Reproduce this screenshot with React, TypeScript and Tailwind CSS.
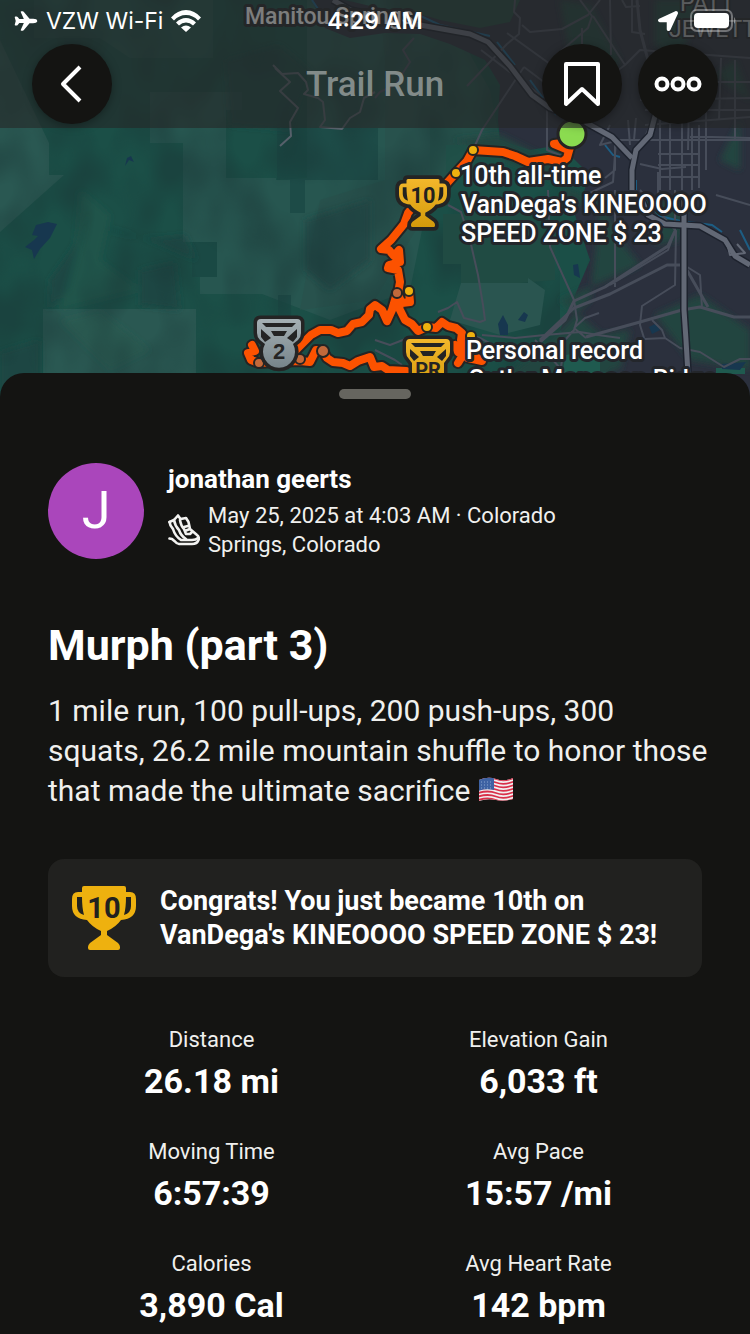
import { IoAirplane } from 'react-icons/io5';
import { FaLocationArrow } from 'react-icons/fa';

const stats = [
  { label: 'Distance', value: '26.18 mi' },
  { label: 'Elevation Gain', value: '6,033 ft' },
  { label: 'Moving Time', value: '6:57:39' },
  { label: 'Avg Pace', value: '15:57 /mi' },
  { label: 'Calories', value: '3,890 Cal' },
  { label: 'Avg Heart Rate', value: '142 bpm' },
];

// Everything the athlete ran, as separate strokes
const route = [
  'M572 140L567 158L562 162L548 159L528 162L515 156L503 152L488 151L473 150L467 161L456 173L448 182L430 205',
  'M571 142L554 144L566 149',
  'M412 208L408 213L404 224L400 229L391 240L381 249L389 250L394 256L399 250L400 262L389 265L388 268L398 270L400 282L398 293',
  'M409 291L410 302L402 303L397 293L392 310L387 321L382 310L375 305L370 309L369 315L362 322L353 324L347 331L338 333L331 330L320 330L311 335L303 343L296 350',
  'M397 300L400 310L405 320L412 324L418 331L427 327L436 328L442 322L448 326L456 328L462 333L461 340L465 347L458 352L455 345M458 363L466 350L482 361L468 358',
  'M252 345L255 351L248 353L251 360L259 363L275 362L300 361L310 362L316 350L323 351L327 358L333 362L343 363L350 366L358 361L370 357L374 367L382 366L388 370L406 371',
];

const minorRoads = [
  'M515 0L514 12L520 18L519 34L507 44L467 86M522 25L530 32L562 29L588 15L600 0M507 33L550 64M481 50L540 95M524 67L565 98M524 67L482 130L473 150M580 0L592 16L588 28L555 56M593 16L625 65L640 50L750 58M625 65L605 80M622 0L626 7L640 6M582 28L582 50M632 0L632 32L645 34',
  'M547 100V150L572 160M610 125L600 145L620 140L750 140M628 120L630 145M636 118L634 140M640 100L750 98M690 50L688 150M721 58L719 120M645 110H750M660 120V190M670 120V190M682 118V190M692 128V190M699 125V188M658 154H700M658 165H700M658 177H700M640 164L662 169L686 167',
  'M645 70L647 98M706 58V170M735 60V140M642 82H750M645 125L750 117M690 137L712 137L750 138M616 140L613 182L590 193M615 140V170L605 178M630 195L615 212M658 172V195M610 0L611 55',
  'M448 205L461 212L470 240L478 275L483 305L485 320L480 322L464 318L457 302L448 308L438 312M375 340L390 345L408 338M375 350L395 360L402 365M482 335L515 338L545 335L580 332L598 335L620 338M548 190L550 247L574 300L577 320L574 330L565 340L561 367M615 190V287M574 328L585 318L599 313M574 328L586 338M640 190L676 231L675 285L642 306L640 325L644 338L640 345M675 190V231L668 250L610 285M652 320L662 330L665 338L645 339M665 338L680 348L700 352L724 367L740 359L750 359M684 265L700 275L702 308M716 195L750 205M535 340L560 368M470 335L480 338L493 345',
  'M375 98L380 92L395 85L410 62L403 50L414 38',
];

const mainRoads = [
  'M637 0L640 30L648 60L657 112L645 138L636 150',
  'M540 340L574 308L610 294L667 265H684L708 307',
  'M540 342L565 320L574 301L605 287L668 246L675 231',
  'M586 337L640 322L682 310L700 307L734 317L750 317',
];

const highways = [
  'M333 0L350 10L385 18L420 25L470 34L488 42L510 66L532 95L550 108L585 122L612 137L632 158',
  'M658 105L650 135L636 150L632 170V190',
  'M640 195L648 215L665 224L700 226L725 240L735 256L750 265M684 200V310L686 340L688 374',
];

const cupPath =
  'M10 2Q10 0 12 0H52Q54 0 54 2V6H58Q64 6 64 13V20Q64 33 49 34Q44 41 35 45V49L46 57Q48 59 48 61V62Q48 64 46 64H18Q16 64 16 62V61Q16 59 18 57L29 49V45Q20 41 15 34Q0 33 0 20V13Q0 6 6 6H10Z';

const Trophy = ({ outlined = false }: { outlined?: boolean }) => (
  <>
    {outlined && <path d={cupPath} stroke="#242424" strokeWidth="10" strokeLinejoin="round" />}
    <path d={cupPath} />
    <path d="M5 11H10Q10 22 12 29Q5 27 5 20ZM59 11H54Q54 22 52 29Q59 27 59 20Z" fill="#21211f" />
    <text x="32" y="32" textAnchor="middle" fill="#21211f" fontSize="29" fontWeight="700" fontFamily="Roboto, sans-serif">
      10
    </text>
  </>
);

const TrailMap = () => (
  <svg
    className="absolute inset-0 h-full w-full"
    viewBox="0 0 750 401"
    preserveAspectRatio="xMidYMin slice"
    role="img"
    aria-label="Route map"
  >
    <defs>
      <linearGradient id="gold" x1="0" y1="0" x2="0" y2="1">
        <stop offset="0" stopColor="#f3b72b" />
        <stop offset="1" stopColor="#d39a0b" />
      </linearGradient>
      <linearGradient id="silver" x1="0" y1="0" x2="0" y2="1">
        <stop offset="0" stopColor="#a5b0b4" />
        <stop offset="1" stopColor="#77848a" />
      </linearGradient>
      <filter id="soft" x="-10%" y="-10%" width="120%" height="120%">
        <feGaussianBlur stdDeviation="3" />
      </filter>
      {/* Hill shading */}
      <filter id="relief" x="0" y="0" width="100%" height="100%" colorInterpolationFilters="sRGB">
        <feTurbulence type="fractalNoise" baseFrequency=".022 .014" numOctaves="2" seed="8" />
        <feColorMatrix values="0 0 0 0 .1  0 0 0 0 .21  0 0 0 0 .21  3 0 0 0 -1.200" />
      </filter>
    </defs>

    {/* Terrain */}
    <rect width="750" height="401" fill="#1b4f47" />
    <g fill="#2a5852">
      <path d="M0 40L49 143V175H64L0 232Z" />
      <path d="M150 92H242V110H226V178H276V180L307 178V0H430V190L410 290L330 320L262 294H200V277H217V242H183V143H150Z" opacity=".8" />
      <path d="M43 309H196V401H43Z" />
      <path d="M34 0H213V58H130L100 38H34Z" opacity=".6" />
    </g>
    <path d="M277 128H378V180H305V213H290V180H277ZM192 242H217V277H192ZM278 295H291V330H278Z" fill="#1a4743" opacity=".7" />
    <path d="M380 0H440L490 90L500 140L440 190L410 240L375 300L300 310L320 200L385 180V60Z" fill="#2a514c" opacity=".7" />
    <g filter="url(#soft)">
      <g fill="#1b4140" opacity=".6">
        <path d="M75 245L90 210L70 290L48 310L50 280Z" />
        <path d="M98 225Q140 245 185 235L196 260L150 240Z" />
        <path d="M225 60L280 45L310 70L290 130L230 125Z" />
        <path d="M140 270L175 262L180 310L140 305Z" />
        <path d="M305 220L370 200V260L330 290L305 270Z" />
        <path d="M0 352L40 340V400H0Z" />
      </g>
      <g fill="#27604f" opacity=".35">
        <path d="M80 190L110 215L100 260L140 290L60 310L75 250Z" />
        <path d="M60 320L100 310L150 350L110 370Z" />
      </g>
    </g>
    <rect width="560" height="401" filter="url(#relief)" opacity=".45" />

    {/* City */}
    <path d="M312 0L325 28L350 38L385 33L420 34L450 44L485 60L500 85L498 120L500 140L530 150L560 145L590 175L575 215L590 260L560 330L590 360L580 401H750V0H505L480 26L440 18L370 6L345 0Z" fill="#2b303d" />
    <path d="M400 0H520L510 22L480 28L440 20L400 8Z" fill="#24463f" />
    <g fill="#24453f" filter="url(#soft)">
      <path d="M560 0L590 5L620 60L605 85L570 55Z" />
      <path d="M655 0H700L680 60L655 45Z" />
      <path d="M455 140L500 135L560 165L565 200L600 210L590 300L540 350L470 401H600L620 350L560 300L640 265L620 240L600 200Z" />
      <path d="M655 315L700 295L750 330V370L690 360Z" />
      <path d="M660 200L685 205L680 240L655 245Z" />
      <path d="M740 120V170L720 160ZM735 60L750 100L715 75Z" />
      <path d="M600 335L630 330L620 370L590 370Z" />
    </g>
    <path d="M443 214H528L555 240V280L520 283H461V264H443Z" fill="#204b43" />
    <path d="M461 283H528V278L545 290L540 325L500 335L450 320Z" fill="#2a5550" />
    <path d="M446 145H505V172H446Z" fill="#1e5047" opacity=".7" />
    <path d="M565 355L600 350V401H560ZM716 368H745V374H716Z" fill="#1f5a4f" />

    {/* Water */}
    <g fill="#17374f">
      <path d="M36 225L48 222L57 224L50 238L40 249L34 259L32 250L25 247L34 240L38 236L32 235Z" />
      <path d="M125 166L127 158L131 156L134 162L129 160Z" />
      <path d="M498 324L503 315L508 325V335H500ZM518 320L524 312L528 315L525 322ZM573 265L578 264L580 278L574 275ZM649 327L657 323L660 330L652 334ZM722 364L746 362L740 370L722 369Z" />
    </g>
    <path d="M312 0L320 12M412 12L440 25L490 36M497 42L515 65M530 80L543 98M548 102L556 115M605 145L613 155L620 157M636 180V190M645 200L660 216L680 221L712 225L722 232M740 230L750 250" fill="none" stroke="#1d5d83" strokeWidth="2" />

    {/* Roads */}
    <g fill="none" strokeLinejoin="round" stroke="#474d5a" strokeWidth="2">
      {minorRoads.map(d => <path key={d} d={d} />)}
      <g strokeWidth="3">
        {mainRoads.map(d => <path key={d} d={d} />)}
      </g>
      <path
        d="M273 65L282 74L298 73L306 82L308 90L304 94L318 98L323 102L325 120L320 127L342 129L350 118L360 112L364 98L375 92M275 68L290 82L280 91L298 108L290 122L291 136L280 146"
        stroke="#56606a"
      />
      <g stroke="#1d222d" strokeWidth="8">
        {highways.map(d => <path key={d} d={d} />)}
      </g>
      <g stroke="#626875" strokeWidth="5">
        {highways.map(d => <path key={d} d={d} />)}
      </g>
      <path d="M727 243L730 255L745 253L737 244" stroke="#626875" />
    </g>

    {/* Route */}
    <g fill="none" strokeLinejoin="round" strokeLinecap="round">
      <g stroke="#242424" strokeWidth="12">
        {route.map(d => <path key={d} d={d} />)}
      </g>
      <g stroke="#fc5200" strokeWidth="8">
        {route.map(d => <path key={d} d={d} />)}
      </g>
    </g>
    <g stroke="#242424" strokeWidth="2">
      <g fill="#eeb10f">
        <circle cx="473" cy="150" r="5" />
        <circle cx="456" cy="173" r="5" />
        <circle cx="409" cy="291" r="5" />
        <circle cx="427" cy="327" r="5" />
        <circle cx="471" cy="336" r="5" />
      </g>
      <g fill="#c2693b">
        <circle cx="397" cy="293" r="5" />
        <circle cx="259" cy="363" r="5" />
        <circle cx="300" cy="359" r="5" />
        <circle cx="323" cy="351" r="6" />
      </g>
      <circle cx="572" cy="134" r="14" fill="#8bdb50" strokeWidth="3" />
    </g>

    {/* Achievement pins */}
    <g transform="translate(399 179) scale(.75)" fill="url(#gold)">
      <Trophy outlined />
    </g>
    <g transform="translate(257 319)">
      <path d="M4 0H40Q44 0 44 4V14Q44 18 41 21L36 25A16 16 0 1 1 8 25L3 21Q0 18 0 14V4Q0 0 4 0Z" fill="url(#silver)" stroke="#242424" strokeWidth="7" paintOrder="stroke" strokeLinejoin="round" />
      <path d="M5 4H39L35 8H9ZM14 12H30L27 17H17ZM4 10L14 19L8 23L4 18ZM40 10L30 19L36 23L40 18Z" fill="#242424" />
      <text x="22" y="40" textAnchor="middle" fill="#242424" fontSize="22" fontWeight="700" fontFamily="'Liberation Sans', sans-serif">2</text>
    </g>
    <g transform="translate(406 339)">
      <path d="M4 0H40Q44 0 44 4V13Q44 17 41 20L38 24V50H6V24L3 20Q0 17 0 13V4Q0 0 4 0Z" fill="url(#gold)" stroke="#242424" strokeWidth="7" paintOrder="stroke" strokeLinejoin="round" />
      <path d="M5 4H39L35 8H9ZM14 12H30L27 17H17ZM4 10L13 18L8 22L4 17ZM40 10L31 18L36 22L40 17Z" fill="#242424" />
      <text x="22" y="38" textAnchor="middle" fill="#242424" fontSize="20" fontWeight="700" fontFamily="Roboto, sans-serif">PR</text>
    </g>

    {/* Labels */}
    <g fontFamily="Roboto, sans-serif" fontSize="25" fontWeight="500" fill="#fff" stroke="#23262b" strokeWidth="6" strokeLinejoin="round" paintOrder="stroke">
      <text x="460" y="184">10th all-time</text>
      <text x="461" y="213">VanDega's KINEOOOO</text>
      <text x="461" y="242">SPEED ZONE $ 23</text>
      <text x="466" y="359">Personal record</text>
      <text x="468" y="388">Cutler Monsoon Ridge</text>
      <text x="245" y="24" fontSize="23">Manitou Springs</text>
      <g fontSize="23" fontWeight="400" fill="#a9abb0" strokeWidth="4">
        <text x="680" y="11">PATT</text>
        <text x="669" y="37">JEWETT</text>
      </g>
    </g>
  </svg>
);

const StatusBar = () => (
  <div className="grid h-[42px] grid-cols-3 items-center px-3.5 font-[Inter,sans-serif] text-[23px] leading-none text-white">
    <div className="flex items-center gap-2">
      <IoAirplane className="h-6 w-6" />
      <span>VZW Wi-Fi</span>
      <svg className="h-[22px] w-[30px]" viewBox="0 0 30 22">
        <path d="M0 7.500Q6.500 0 15 0T30 7.500L27 10.500Q22 5 15 5T3 10.500Z" fill="#fff" />
        <path d="M5 12.500Q9.500 8 15 8T25 12.500L22 15.500Q19 12.500 15 12.500T8 15.500Z" fill="#fff" />
        <path d="M10 17.500Q15 13.500 20 17.500L15 22Z" fill="#fff" />
      </svg>
    </div>
    <span className="text-center font-semibold">4:29 AM</span>
    <div className="flex items-center justify-end gap-3">
      <FaLocationArrow className="size-5" />
      <svg className="h-6 w-[46px]" viewBox="0 0 46 24">
        <rect x="1" y="1" width="41" height="21" rx="6" fill="none" stroke="#fff" strokeOpacity=".35" strokeWidth="2" />
        <rect x="4" y="4" width="35" height="15" rx="4" fill="#fff" />
        <path d="M44 8Q47 11.500 44 15Z" fill="#fff" opacity=".4" />
      </svg>
    </div>
  </div>
);

const roundButton =
  'flex size-20 shrink-0 items-center justify-center rounded-full bg-[#141412] text-white shadow-[0_2px_10px_rgba(0,0,0,0.35)]';

const NavBar = () => (
  <div className="flex h-[86px] items-center justify-between px-8 pb-0.5">
    <div className="flex flex-1">
      <button className={roundButton} aria-label="Back">
        <svg className="h-10 w-10" viewBox="0 0 40 40" fill="none" stroke="currentColor" strokeWidth="4">
          <path d="M28 3L11 20L28 37" strokeLinejoin="round" />
        </svg>
      </button>
    </div>
    <h1 className="pt-0.5 text-[35px] font-medium text-[#828b89]">Trail Run</h1>
    <div className="flex flex-1 justify-end gap-4">
      <button className={roundButton} aria-label="Save route">
        <svg className="h-12 w-12" viewBox="0 0 48 48" fill="none" stroke="currentColor" strokeWidth="4" strokeLinejoin="round">
          <path d="M8 4H40V44L24 29L8 44Z" />
        </svg>
      </button>
      <button className={roundButton} aria-label="More options">
        <svg className="h-4 w-12" viewBox="0 0 48 16" fill="none" stroke="currentColor" strokeWidth="4">
          <circle cx="8" cy="8" r="5.500" />
          <circle cx="24" cy="8" r="5.500" />
          <circle cx="40" cy="8" r="5.500" />
        </svg>
      </button>
    </div>
  </div>
);

const ShoeIcon = () => (
  <svg className="size-8 shrink-0" viewBox="0 0 32 32" fill="none" stroke="#f2f2f0" strokeWidth="2.600" strokeLinejoin="round" strokeLinecap="round">
    <path d="M1.500 8L6 6L10 1.500L12.500 5L18 4L20.500 8L22 15L29 21Q31.500 23 30.500 26Q29 30 24 30H11Q9 30 7 27.500L4 25L1.500 24.500" />
    <path d="M1.500 8Q2 12 5 15Q7 22 13 26H24Q28 26 30 24" />
    <path d="M6 6Q7 12 11 16Q13 22 18 25" />
    <path d="M12 6Q13 12 16 15L18 20H22L24 18M16 13L20 12M18 16.500L22 15" />
  </svg>
);

const FlagIcon = () => (
  <svg className="inline-block h-7 w-9 align-[-3px]" viewBox="0 0 36 28" role="img" aria-label="United States flag">
    <defs>
      <clipPath id="flag">
        <path d="M1 4Q10 0 18 3T35 2V23Q26 26 18 24T1 25Z" />
      </clipPath>
    </defs>
    <g clipPath="url(#flag)">
      <rect width="36" height="28" fill="#f1eff0" />
      <g fill="none" stroke="#d9304a" strokeWidth="1.800">
        {[3, 6.5, 10, 13.5, 17, 20.5, 24].map(y => (
          <path key={y} d={`M0 ${y}Q10 ${y - 3} 18 ${y}T36 ${y - 1}`} />
        ))}
      </g>
      <path d="M0 0H16V14Q8 12 0 15Z" fill="#3e62a3" />
      <path d="M3 6H15M3 9H15M3 12H15" stroke="#8ba6d0" strokeDasharray="1 2" />
    </g>
  </svg>
);

const App = () => (
  <div className="min-h-screen bg-[#141412] font-[Roboto,sans-serif] text-white">
    <section className="relative h-[401px] overflow-hidden">
      <TrailMap />
      <header className="relative bg-[#242626]/60">
        <StatusBar />
        <NavBar />
      </header>
    </section>

    {/* Bottom sheet */}
    <main className="relative -mt-7 rounded-t-3xl bg-[#141412] px-12 pt-4">
      <div className="mx-auto h-[10px] w-[72px] rounded-full bg-[#66655f]" />

      <div className="mt-16 flex items-center gap-6">
        <div className="flex size-24 shrink-0 items-center justify-center rounded-full bg-[#aa46bb] text-[52px]">J</div>
        <div>
          <p className="text-[26px] leading-8 font-bold">jonathan geerts</p>
          <div className="mt-1.5 flex max-w-[400px] items-center gap-2">
            <ShoeIcon />
            <p className="text-[22px] leading-[29px] text-[#f0f0ee]">May 25, 2025 at 4:03 AM · Colorado Springs, Colorado</p>
          </div>
        </div>
      </div>

      <h2 className="mt-[60px] text-[43px] leading-[52px] font-bold">Murph (part 3)</h2>
      <p className="-mr-3 mt-5 text-[30px] leading-10 text-[#f0f0ee]">
        1 mile run, 100 pull-ups, 200 push-ups, 300 squats, 26.2 mile mountain shuffle to honor those that made the
        ultimate sacrifice <FlagIcon />
      </p>

      <div className="mt-12 flex items-center gap-6 rounded-2xl bg-[#21211f] p-6">
        <svg className="size-16 shrink-0" viewBox="0 0 64 64" fill="#eeb10f">
          <Trophy />
        </svg>
        <p className="py-px text-[27px] leading-[34px] font-bold">
          Congrats! You just became 10th on VanDega's KINEOOOO SPEED ZONE $ 23!
        </p>
      </div>

      <dl className="mt-[49px] grid grid-cols-2 gap-y-[37px] text-center">
        {stats.map(stat => (
          <div key={stat.label}>
            <dt className="text-[22px] leading-7 text-[#f0f0ee]">{stat.label}</dt>
            <dd className="mt-[7px] text-[34px] leading-10 font-bold">{stat.value}</dd>
          </div>
        ))}
      </dl>
    </main>
  </div>
);

export default App;
